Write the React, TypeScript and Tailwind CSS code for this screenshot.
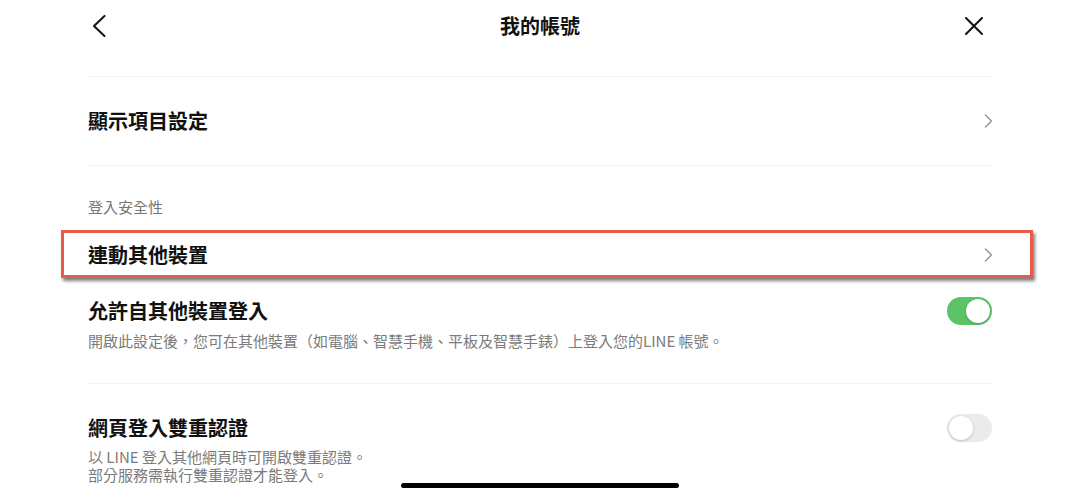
import type { ReactNode } from 'react';

function ChevronRight() {
  return (
    <svg width="9" height="14" viewBox="0 0 9 14" fill="none" className="mr-[-1px]">
      <polyline points="1.5,1 7.5,7 1.5,13" stroke="#9a9a9a" strokeWidth="1.6" strokeLinecap="round" strokeLinejoin="round" />
    </svg>
  );
}

function Toggle({ on }: { on: boolean }) {
  return (
    <div
      className={`w-[45px] h-[28px] rounded-full p-[2px] flex shrink-0 ${
        on ? 'bg-[#5ac466] justify-end' : 'bg-[#ebebed] justify-start'
      }`}
    >
      <div className="w-[24px] h-[24px] rounded-full bg-white shadow-[0_1px_3px_rgba(0,0,0,0.2)]" />
    </div>
  );
}

function Divider() {
  return <div className="h-px bg-[#f1f1f1]" />;
}

function Title({ children }: { children: ReactNode }) {
  return <div className="text-[20px] leading-[28px] font-bold text-[#111]">{children}</div>;
}

export default function App() {
  return (
    <div className="relative w-[1080px] h-[498px] overflow-hidden bg-white font-['Noto_Sans_CJK_TC','Noto_Sans_CJK_SC',sans-serif]">
      {/* top bar */}
      <header className="h-[52px] px-[88px] flex items-center">
        <div className="w-[40px] flex items-center pl-[4px]">
          <svg width="14" height="22" viewBox="0 0 14 22" fill="none">
            <polyline points="12.5,1 2,11 12.5,21" stroke="#111" strokeWidth="2" strokeLinecap="round" strokeLinejoin="round" />
          </svg>
        </div>
        <div className="flex-1 text-center text-[20px] font-bold text-[#111]">我的帳號</div>
        <div className="w-[40px] flex justify-end pr-[9px]">
          <svg width="18" height="18" viewBox="0 0 18 18" fill="none">
            <path d="M1 1L17 17M17 1L1 17" stroke="#111" strokeWidth="2" strokeLinecap="round" />
          </svg>
        </div>
      </header>

      <main className="px-[88px] pt-[24px]">
        <Divider />
        <div className="h-[88px] flex items-center justify-between">
          <Title>顯示項目設定</Title>
          <ChevronRight />
        </div>
        <Divider />

        <div className="pt-[31px] pb-[16px] text-[15px] leading-[20px] text-[#777]">登入安全性</div>

        <div className="relative h-[44px] flex items-center justify-between">
          <Title>連動其他裝置</Title>
          <ChevronRight />
          <span className="absolute left-[-27px] right-[-41px] top-[-3px] bottom-[-1px] border-[3px] border-[#e65b4c] shadow-[2px_3px_3px_rgba(0,0,0,0.5)] pointer-events-none" />
        </div>

        <div className="pt-[20px] pb-[32px]">
          <div className="flex items-center justify-between">
            <Title>允許自其他裝置登入</Title>
            <Toggle on />
          </div>
          <p className="mt-[6px] text-[15px] leading-[20px] text-[#7b7b7b]">
            開啟此設定後，您可在其他裝置（如電腦、智慧手機、平板及智慧手錶）上登入您的LINE 帳號。
          </p>
        </div>
        <Divider />

        <div className="pt-[30px]">
          <div className="flex items-center justify-between">
            <Title>網頁登入雙重認證</Title>
            <Toggle on={false} />
          </div>
          <div className="mt-[6px] flex flex-col text-[15px] leading-[18px] text-[#7b7b7b]">
            <span className="h-[18px]">以 LINE 登入其他網頁時可開啟雙重認證。</span>
            <span className="h-[18px]">部分服務需執行雙重認證才能登入。</span>
          </div>
        </div>
      </main>

      {/* home indicator */}
      <div className="absolute left-[401px] bottom-[10px] w-[278px] h-[5px] rounded-full bg-black" />
    </div>
  );
}
